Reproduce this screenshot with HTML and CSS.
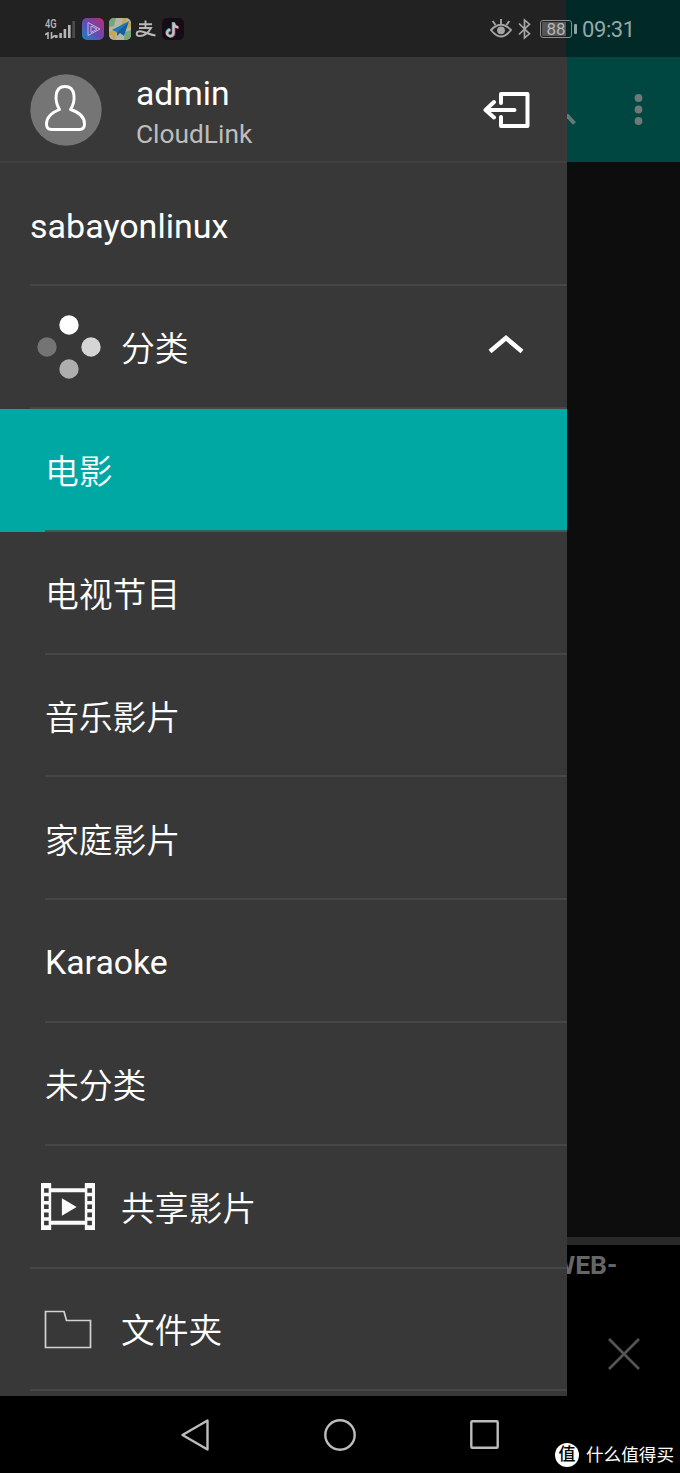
FILE: index.html
```html
<!DOCTYPE html>
<html lang="zh-CN">
<head>
<meta charset="utf-8">
<title>CloudLink</title>
<link rel="stylesheet" href="styles.css">
</head>
<body>
<div class="screen">
  <header class="status">
    <div class="signal">
      <div class="network"><span>4G</span>
        <svg width="11" height="7" viewBox="0 0 11 7" fill="none" stroke="#b5b5b5" stroke-width="1.600"><path d="M0 2.800 3 .8V7M6.500 0V6L10 3.500"/></svg>
      </div>
      <svg class="bars" width="21" height="18" viewBox="0 0 21 18" fill="#b5b5b5"><rect y="14" width="2.600" height="3"/><rect x="4.300" y="12" width="2.600" height="5"/><rect x="8.600" y="8" width="2.600" height="9"/><rect x="13" y="4" width="2.600" height="13"/><rect x="17.300" y="0" width="2.800" height="17" fill="#4b4b4b"/></svg>
    </div>
    <svg class="app" width="22" height="22" viewBox="0 0 22 22">
      <defs><linearGradient id="video" x1="0" y1="1" x2="1" y2="0"><stop offset="0" stop-color="#1688c4"/><stop offset=".5" stop-color="#6947b4"/><stop offset="1" stop-color="#c3286e"/></linearGradient></defs>
      <rect width="22" height="22" rx="5" fill="url(#video)"/><path d="M6 4.500 18 11 6 17.500ZM9 8l6 3-6 3.500Z" fill="none" stroke="#c3b6da" stroke-width="1" stroke-linejoin="round"/>
    </svg>
    <svg class="app" width="22" height="22" viewBox="0 0 22 22">
      <defs><clipPath id="mapclip"><rect width="22" height="22" rx="5"/></clipPath></defs>
      <g clip-path="url(#mapclip)"><path fill="#b7b5a5" d="M0 0h22v22H0z"/><path fill="#76a57c" d="M0 0h7L5 8 0 9zM15 22l1-8 6-2v10z"/><path fill="#c6a64e" d="M14 0h4l-2 6 6-2v5L0 18v-4l12-5zM3 15h3l1 7H4z"/></g>
      <path fill="#1777c4" d="M20 3 3 12l5 2z"/><path fill="#10619f" d="m20 3-5 15-4-3-3 3v-4z"/>
    </svg>
    <svg class="app" width="22" height="22" viewBox="0 0 22 22" fill="none" stroke="#b8b8b8" stroke-width="1.900"><path d="M4 6.200h13M10.500 2.500v7M4 10h12C13.500 14.500 9 18 4.500 18c-3.500 0-4-4.200 0-4.700 4-.4 9 3.200 16 4.200"/></svg>
    <svg class="app" width="22" height="22" viewBox="0 0 22 22" fill="none" stroke-width="2.400"><rect width="22" height="22" rx="5" fill="#160c16"/><path d="M10.800 4v10.500a3.200 3.200 0 1 1-3.200-3.200M10.800 4c.4 3 2 4.600 4.700 4.700" stroke="#168d91"/><path d="M12.300 5v10.500a3.200 3.200 0 1 1-3.200-3.200M12.300 5c.4 3 2 4.600 4.700 4.700" stroke="#b32c50"/><path d="M11.500 4.500V15a3.200 3.200 0 1 1-3.200-3.200M11.500 4.500c.4 3 2 4.600 4.700 4.700" stroke="#c3c3c3"/></svg>
    <div class="status-right">
      <svg width="22" height="21" viewBox="0 0 22 21" fill="none" stroke="#a5a5a5" stroke-width="1.900"><path d="M1 12Q11 1.500 21 12Q11 25 1 12ZM11 6V1M5.500 7 2.700 3M16.500 7 19.300 3"/><circle cx="11" cy="12.300" r="3.900" fill="#a5a5a5" stroke="none"/></svg>
      <svg class="bluetooth" width="13" height="22" viewBox="0 0 13 22" fill="none" stroke="#a5a5a5" stroke-width="1.700"><path d="m1 5.500 10.500 10.300L6.500 20V2l5 4.200L1 16.500"/></svg>
      <div class="battery">88</div><i class="battery-tip"></i>
      <time>09:31</time>
    </div>
  </header>
  <main class="main">
    <nav class="drawer">
      <div class="account">
        <svg class="avatar" width="72" height="72" viewBox="0 0 72 72"><circle cx="36" cy="36" r="35.700" fill="#757575"/><path d="M29.500 35.500C24.800 28 23.500 12.500 35 12.500S45.500 28 40.500 35.500C47 37.500 54.500 42 54.500 50Q54.500 55.500 49.500 55.500H21.500Q16.500 55.500 16.500 50C16.500 42 23 38 29.500 35.500Z" fill="none" stroke="#fff" stroke-width="2.900" stroke-linejoin="round"/></svg>
        <div class="account-text"><div class="name">admin</div><div class="product">CloudLink</div></div>
        <svg class="logout" width="48" height="38" viewBox="0 0 48 38" fill="none" stroke="#fff" stroke-width="4" stroke-linecap="round" stroke-linejoin="round"><path d="M18 12V3h26.500v32H18v-9M31.500 19H2.500M11 11 2.500 19l8.500 7.500"/></svg>
      </div>
      <div class="row device">sabayonlinux</div>
      <div class="row group">
        <svg class="icon dots" width="64" height="64" viewBox="0 0 64 64"><circle cx="32" cy="10" r="9.700" fill="#fff"/><circle cx="54" cy="32" r="9.700" fill="#d5d5d5"/><circle cx="32" cy="54" r="9.700" fill="#aeaeae"/><circle cx="10" cy="32" r="9.700" fill="#747474"/></svg>
        <span>分类</span>
        <svg class="chevron" width="36" height="20" viewBox="0 0 36 20" fill="none" stroke="#fff" stroke-width="4.500"><path d="M2 17.500 18 4l16 13.500"/></svg>
      </div>
      <div class="row sub selected">电影</div>
      <div class="row sub">电视节目</div>
      <div class="row sub">音乐影片</div>
      <div class="row sub">家庭影片</div>
      <div class="row sub latin">Karaoke</div>
      <div class="row sub">未分类</div>
      <div class="row group">
        <svg class="icon film" width="54" height="47" viewBox="0 0 53 46"><path fill="#fafafa" fill-rule="evenodd" d="M0 0H10V5H43V0H53V46H43V41H10V46H0ZM10 9V37H43V9ZM3 5h4.500v4.500H3Zm0 8h4.500v4.500H3Zm0 8h4.500v4.500H3Zm0 8h4.500v4.500H3Zm0 8h4.500v4.500H3ZM45.500 5H50v4.500h-4.500Zm0 8H50v4.500h-4.500Zm0 8H50v4.500h-4.500Zm0 8H50v4.500h-4.500Zm0 8H50v4.500h-4.500ZM20.500 15 35 23.500 20.500 32Z"/></svg>
        <span>共享影片</span>
      </div>
      <div class="row group">
        <svg class="icon folder" width="48" height="39" viewBox="0 0 48 39" fill="none" stroke="#d2d2d2" stroke-width="1.700"><path d="M1.500 1.500H20L22.500 10.500H46.500V37.500H1.500Z"/></svg>
        <span>文件夹</span>
      </div>
    </nav>
    <section class="behind">
      <div class="toolbar">
        <svg width="10" height="14" viewBox="0 0 10 14"><path d="m-3-2 10.500 11.500" stroke="#657979" stroke-width="4"/></svg>
        <svg class="more" width="9" height="31" viewBox="0 0 9 31" fill="#707878"><circle cx="4.500" cy="4" r="3.900"/><circle cx="4.500" cy="15.500" r="3.900"/><circle cx="4.500" cy="27" r="3.900"/></svg>
      </div>
      <div class="content"></div>
      <div class="player">
        <div class="track">WEB-</div>
        <svg class="close" width="32" height="32" viewBox="0 0 32 32" stroke="#555" stroke-width="2.700"><path d="M1 1 31 31M31 1 1 31"/></svg>
      </div>
    </section>
  </main>
  <footer class="navbar">
    <svg width="28" height="32" viewBox="0 0 28 32"><path d="M1.500 16 26.500 1.500v29Z"/></svg>
    <svg width="32" height="32" viewBox="0 0 32 32"><circle cx="16" cy="16" r="14.700"/></svg>
    <svg width="29" height="29" viewBox="0 0 29 29"><rect x="1.300" y="1.300" width="26.400" height="26.400" rx="1"/></svg>
  </footer>
  <div class="watermark"><span class="seal">值</span><span>什么值得买</span></div>
</div>
</body>
</html>
```
FILE: styles.css
```css
* { box-sizing: border-box; }
body { margin: 0; background: #000; }
svg { display: block; flex: none; }
.screen {
  position: relative;
  display: flex;
  flex-direction: column;
  width: 680px;
  height: 1473px;
  overflow: hidden;
  font-family: Roboto, "Noto Sans CJK SC", sans-serif;
  color: #fff;
}
.status {
  display: flex;
  align-items: center;
  height: 57px;
  flex: none;
  padding-left: 45px;
  background: linear-gradient(90deg, #222 566.500px, #002928 566.500px);
}
.signal { display: flex; width: 37px; height: 25px; align-items: flex-end; }
.network { width: 11px; padding-bottom: 2px; font-size: 12.500px; line-height: 12px; font-weight: 500; color: #b5b5b5; }
.network span { display: block; transform: scaleX(.75); transform-origin: left; }
.network svg { margin-top: 2px; }
.bars { margin: 0 0 2px -1px; }
.app { margin-right: 4.600px; }
.status-right { display: flex; align-items: center; margin-left: auto; width: 190px; }
.bluetooth { margin-left: 6px; }
.battery {
  width: 32px;
  height: 18px;
  margin-left: 9px;
  border: 1px solid #8a8f8f;
  border-radius: 3px;
  background: linear-gradient(90deg, #555 25px, transparent 25px);
  background-clip: content-box;
  padding: 1px;
  font-size: 17px;
  line-height: 15px;
  text-align: center;
  color: #b5b8b8;
}
.battery-tip { width: 3px; height: 10px; margin-left: 2px; border-radius: 1px; background: #8fa3a2; }
time { margin-left: 5px; padding-top: 2px; font-size: 22px; line-height: 26px; color: #95a8a7; letter-spacing: -.4px; }
.main { display: flex; height: 1339px; flex: none; }
.drawer { width: 566.500px; flex: none; height: 1339px; overflow: hidden; background: #383838; }
.account { display: flex; height: 106.400px; border-bottom: 2px solid #404040; padding-left: 30px; }
.avatar { margin-top: 16.500px; }
.account-text { width: 347px; margin-left: 34px; padding-top: 17px; }
.name { font-size: 33.700px; line-height: 40px; }
.product { font-size: 26.300px; line-height: 40px; color: #bdbdbd; }
.logout { margin-top: 34px; }
.row {
  display: flex;
  align-items: center;
  height: 122.800px;
  padding-top: 8px;
  margin-left: 30px;
  border-bottom: 2px solid #464646;
  font-size: 33.800px;
  line-height: 48px;
  font-weight: 350;
}
.group { padding-top: 7px; }
.group span { margin-left: 20px; }
.icon { margin-top: -6px; }
.dots { margin-left: 7px; }
.film { margin-left: 11px; }
.film + span { margin-left: 26px; }
.folder { margin-left: 14px; }
.folder + span { margin-left: 29px; }
.chevron { margin: -12px 43px 0 auto; }
.sub { margin-left: 45px; }
.device, .latin { padding-top: 4px; font-weight: 400; font-size: 33.800px; }
.device { font-size: 34px; }
.selected {
  margin-left: 0;
  padding-left: 45px;
  padding-bottom: 2px;
  border-bottom: 0;
  background: linear-gradient(#315f5d, #315f5d) 45px 100% / 100% 2px no-repeat, #00a8a3;
}
.behind { flex: 1; min-width: 0; overflow: hidden; display: flex; flex-direction: column; }
.toolbar { display: flex; height: 105px; padding-top: 37px; background: #004641; }
.toolbar > svg:first-child { margin-top: 20px; }
.more { margin-left: 57px; }
.content { flex: 1; background: #0d0d0d; border-bottom: 8px solid #292929; }
.player { height: 151px; background: #000; }
.track { margin-left: -14.500px; padding-top: 4px; font-size: 26.500px; line-height: 32px; font-weight: 700; color: #666; }
.close { margin: 57px 0 0 41.500px; }
.navbar { display: flex; align-items: center; height: 77px; flex: none; padding-left: 180.500px; background: #000; }
.navbar svg { fill: none; stroke: #bcbcbc; stroke-width: 2.400; stroke-linejoin: round; }
.navbar svg + svg { margin-left: 115px; }
.navbar svg:last-child { margin-left: 114px; }
.watermark {
  position: absolute;
  left: 555px;
  top: 1442px;
  display: flex;
  align-items: center;
  gap: 7px;
  height: 26px;
  white-space: nowrap;
  font-size: 17.600px;
  line-height: 26px;
}
.seal { width: 24px; height: 24px; border-radius: 50%; background: #fff; color: #000; font-size: 17px; line-height: 23px; text-align: center; font-weight: 500; }
```
